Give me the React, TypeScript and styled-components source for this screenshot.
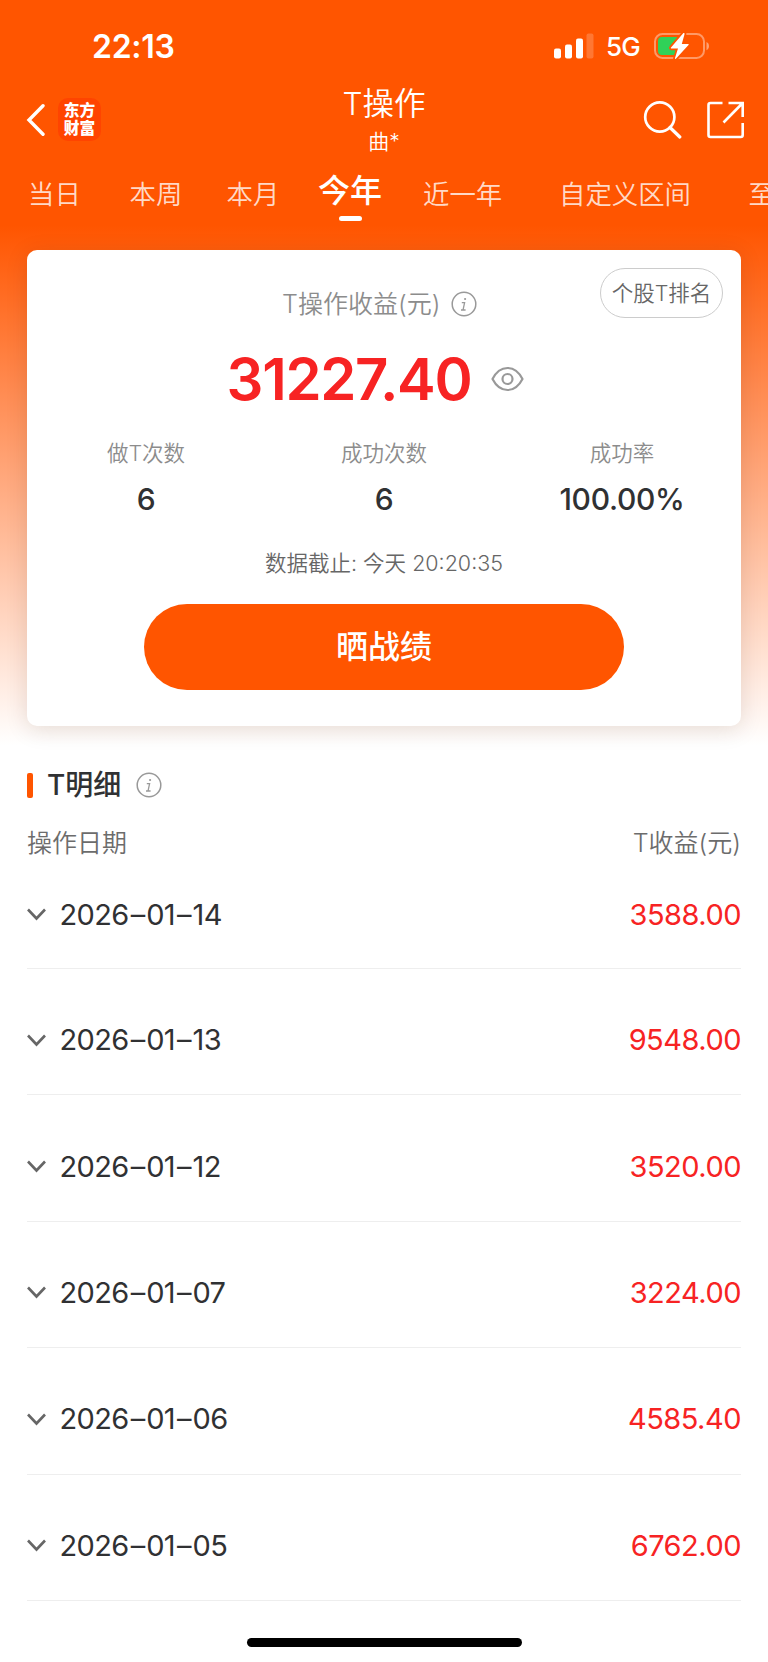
import React from "react";
import styled, { createGlobalStyle } from "styled-components";

const GlobalStyle = createGlobalStyle`
  *, *::before, *::after { box-sizing: border-box; }
  body {
    margin: 0;
    background: #fff;
    font-family: Inter, "Noto Sans CJK SC", sans-serif;
    color: #303133;
    overflow: hidden;
  }
  button { font: inherit; border: 0; padding: 0; background: none; color: inherit; }
`;

const Page = styled.div`
  width: 768px;
  height: 1662px;
  display: flex;
  flex-direction: column;
  overflow: hidden;
  background: linear-gradient(180deg, #ff5500 0, #ff5500 225px, #ffffff 745px);
`;

const StatusBar = styled.div`
  height: 81px;
  padding: 13px 58px 0 92px;
  display: flex;
  align-items: center;
  justify-content: space-between;
  color: #fff;
`;

const Clock = styled.span`
  font-size: 32px;
  font-weight: 600;
  line-height: 40px;
  letter-spacing: -0.3px;
`;

const StatusIcons = styled.div`
  display: flex;
  align-items: center;
  padding-bottom: 2px;
`;

const Network = styled.span`
  margin: 2px 14px 0 12px;
  font-size: 26px;
  font-weight: 500;
  line-height: 32px;
  letter-spacing: -0.8px;
`;

const NavBar = styled.header`
  height: 76px;
  padding: 0 24px 0 26px;
  display: grid;
  grid-template-columns: 1fr auto 1fr;
  align-items: center;
  color: #fff;
`;

const NavSide = styled.div<{ $end?: boolean }>`
  display: flex;
  align-items: center;
  justify-content: ${(p) => (p.$end ? "flex-end" : "flex-start")};
  gap: ${(p) => (p.$end ? 25 : 13)}px;
`;

const IconButton = styled.button`
  display: flex;
`;

const Logo = styled.div`
  width: 43px;
  height: 43px;
  padding-bottom: 2px;
  border-radius: 10px;
  background: #ff4400;
  display: flex;
  flex-direction: column;
  align-items: center;
  justify-content: center;
  font-family: "Noto Sans CJK SC", sans-serif;
  font-weight: 900;
  font-size: 15.7px;
  line-height: 18px;
`;

const TitleBlock = styled.div`
  display: flex;
  flex-direction: column;
  align-items: center;
  padding: 1px 2px 0 0;
`;

const Title = styled.h1`
  margin: 0;
  font-size: 31.5px;
  font-weight: 350;
  line-height: 44px;
`;

const Subtitle = styled.span`
  font-size: 21px;
  font-weight: 350;
  line-height: 32px;
`;

const Tabs = styled.nav`
  height: 75px;
  padding-left: 28px;
  display: grid;
  grid-template-columns: 101.5px 97px 91.5px 105px 136px 189.5px 60px;
  align-items: start;
`;

const Tab = styled.button<{ $active?: boolean }>`
  width: max-content;
  display: flex;
  flex-direction: column;
  align-items: center;
  white-space: nowrap;
  padding-top: ${(p) => (p.$active ? 14 : 17)}px;
  font-size: ${(p) => (p.$active ? 32 : 26.4)}px;
  font-weight: ${(p) => (p.$active ? 500 : 350)};
  line-height: 40px;
  color: ${(p) => (p.$active ? "#fff" : "rgba(255, 255, 255, 0.8)")};

  &::after {
    content: "";
    display: ${(p) => (p.$active ? "block" : "none")};
    width: 23px;
    height: 5.5px;
    margin-top: 4.5px;
    border-radius: 3px;
    background: #fff;
  }
`;

const Card = styled.section`
  position: relative;
  flex: none;
  height: 476px;
  margin: 17.5px 27px 0;
  border-radius: 10px;
  background: #fff;
  box-shadow: 0 4px 22px rgba(60, 30, 0, 0.13);
  display: flex;
  flex-direction: column;
  align-items: center;
`;

const RankButton = styled.button`
  position: absolute;
  top: 18px;
  right: 18px;
  width: 123px;
  height: 50px;
  border: 1px solid #ccc;
  border-radius: 25px;
  font-size: 21.5px;
  font-weight: 350;
  line-height: 48px;
  color: #666;
  white-space: nowrap;
`;

const CardTitle = styled.div`
  margin-top: 36px;
  height: 36px;
  display: flex;
  align-items: center;
  gap: 10.5px;
  padding-right: 9px;
  font-size: 25px;
  font-weight: 350;
  line-height: 36px;
  color: #8c8c8c;
`;

const ProfitRow = styled.div`
  margin-top: 24px;
  height: 66px;
  display: flex;
  align-items: center;
  gap: 20px;
  padding-right: 17px;
`;

const Profit = styled.span`
  font-size: 58px;
  font-weight: 570;
  line-height: 66px;
  letter-spacing: -1.3px;
  color: #f72323;
`;

const Stats = styled.div`
  align-self: stretch;
  margin-top: 25px;
  display: grid;
  grid-template-columns: repeat(3, 1fr);
`;

const Stat = styled.div`
  display: flex;
  flex-direction: column;
  align-items: center;
`;

const StatLabel = styled.span`
  font-size: 21.5px;
  font-weight: 350;
  line-height: 32px;
  color: #8c8c8c;
`;

const StatValue = styled.span`
  margin-top: 10px;
  font-size: 30px;
  font-weight: 500;
  line-height: 40px;
  letter-spacing: -0.3px;
`;

const Deadline = styled.div`
  margin-top: 28px;
  font-size: 21.5px;
  font-weight: 350;
  line-height: 32px;
  color: #666;
`;

const ShareButton = styled.button`
  margin-top: 25.5px;
  width: 480px;
  height: 86px;
  border-radius: 43px;
  background: #ff5500;
  color: #fff;
  font-size: 32px;
  font-weight: 500;
  line-height: 86px;
`;

const Details = styled.section`
  padding: 41.5px 27px 0;
  display: flex;
  flex-direction: column;
`;

const SectionTitle = styled.div`
  height: 36px;
  display: flex;
  align-items: center;
`;

const Marker = styled.i`
  width: 6px;
  height: 25px;
  border-radius: 2px;
  background: #ff5500;
`;

const SectionName = styled.h2`
  margin: 0 15px 0 14px;
  font-size: 28px;
  font-weight: 500;
  line-height: 36px;
`;

const ColumnHeads = styled.div`
  margin-top: 22px;
  display: flex;
  justify-content: space-between;
  font-size: 25px;
  font-weight: 350;
  line-height: 36px;
  color: #6c6c6c;
`;

const Row = styled.div`
  height: 126.4px;
  padding-top: 17px;
  border-bottom: 1.5px solid #eee;
  display: flex;
  align-items: center;
  justify-content: space-between;

  &:first-of-type {
    height: 108px;
    padding-top: 0;
  }
`;

const RowList = styled.div`
  display: flex;
  flex-direction: column;
`;

const DateCell = styled.div`
  display: flex;
  align-items: center;
  gap: 12.5px;
  font-size: 29px;
  font-weight: 380;
  line-height: 40px;
  letter-spacing: -0.6px;
  font-feature-settings: "calt" 0;
`;

const Dash = styled.span`
  margin: 0 1.5px 0 2px;
`;

const Amount = styled.span`
  font-size: 29px;
  font-weight: 380;
  line-height: 40px;
  letter-spacing: -0.5px;
  color: #f72323;
`;

const HomeIndicator = styled.div`
  flex: none;
  width: 275px;
  height: 9.5px;
  margin: auto auto 15px;
  border-radius: 5px;
  background: #000;
`;

const InfoIcon = () => (
  <svg width="26" height="26" viewBox="0 0 26 26" fill="none" stroke="#999">
    <circle cx="13" cy="13" r="11.8" strokeWidth="1.5" />
    <circle cx="14.1" cy="8" r="1.1" fill="#999" stroke="none" />
    <path d="M10.8 11.6h2.8l-1.5 7M10 19h4.6" strokeWidth="1.3" />
  </svg>
);

const EyeIcon = () => (
  <svg width="33" height="26" viewBox="0 0 33 26" fill="none" stroke="#999" strokeWidth="2.2">
    <path d="M1.5 13C5 6.2 10.4 2 16.5 2S28 6.2 31.5 13C28 19.8 22.6 24 16.5 24S5 19.8 1.5 13Z" strokeLinejoin="round" />
    <circle cx="16.5" cy="13" r="5" />
  </svg>
);

const ChevronDown = () => (
  <svg width="20" height="13" viewBox="0 0 20 13" fill="none" stroke="#666" strokeWidth="2.6">
    <path d="M1 1.5l8.500 9 8.500-9" />
  </svg>
);

const SignalIcon = () => (
  <svg width="40" height="26" viewBox="0 0 40 26" fill="#fff">
    <rect x="0" y="15.5" width="7" height="10" rx="2" />
    <rect x="11" y="11.5" width="7" height="14" rx="2" />
    <rect x="22" y="5.5" width="7" height="20" rx="2" />
    <rect x="32.5" y="0.5" width="7" height="25" rx="2" opacity="0.2" />
  </svg>
);

const BatteryIcon = () => (
  <svg width="56" height="28" viewBox="0 0 56 28">
    <rect x="1" y="2" width="49" height="24" rx="7.5" fill="none" stroke="#fff" strokeOpacity="0.4" strokeWidth="2" />
    <path d="M52.5 10c3.3 1.2 3.3 7 0 8.2z" fill="#fff" fillOpacity="0.45" />
    <path d="M8 5h15v18H8a4 4 0 0 1-4-4V9a4 4 0 0 1 4-4z" fill="#30d158" />
    <path
      d="M29 1.5L17 15.5c-.4.5-.1 1 .5 1h6.500l-3 9.500c-.3 1 .4 1.3 1.1.6L34.5 13c.4-.5.1-1-.5-1h-6.200l2.700-9.800c.3-1-.8-1.500-1.500-.7z"
      fill="#fff"
      stroke="#ff5500"
      strokeWidth="3.6"
      paintOrder="stroke"
    />
  </svg>
);

const BackIcon = () => (
  <svg width="19" height="32" viewBox="0 0 19 32" fill="none" stroke="#fff" strokeWidth="3.4">
    <path d="M17 1.8L3 16l14 14.2" strokeLinecap="round" />
  </svg>
);

const SearchIcon = () => (
  <svg width="40" height="40" viewBox="0 0 40 40" fill="none" stroke="#fff" strokeWidth="2.7">
    <circle cx="17.8" cy="17" r="14.6" />
    <path d="M28 27.5l9.800 9.500" strokeWidth="3.2" strokeLinecap="round" />
  </svg>
);

const ShareIcon = () => (
  <svg width="37" height="38" viewBox="0 0 37 38" fill="none" stroke="#fff" strokeWidth="2.6">
    <path d="M15.5 2H3.500Q1.500 2 1.500 4v30q0 2 2 2H33.700q2 0 2-2V22" />
    <path d="M21.500 2H35.700v14M35.200 2.500L16.500 21.500" />
  </svg>
);

const tabs = ["当日", "本周", "本月", "今年", "近一年", "自定义区间", "至今"];
const activeTab = "今年";

const stats = [
  { label: "做T次数", value: "6" },
  { label: "成功次数", value: "6" },
  { label: "成功率", value: "100.00%" },
];

const records = [
  { date: ["2026", "01", "14"], amount: "3588.00" },
  { date: ["2026", "01", "13"], amount: "9548.00" },
  { date: ["2026", "01", "12"], amount: "3520.00" },
  { date: ["2026", "01", "07"], amount: "3224.00" },
  { date: ["2026", "01", "06"], amount: "4585.40" },
  { date: ["2026", "01", "05"], amount: "6762.00" },
];

export default function App() {
  return (
    <Page>
      <GlobalStyle />
      <StatusBar>
        <Clock>22:13</Clock>
        <StatusIcons>
          <SignalIcon />
          <Network>5G</Network>
          <BatteryIcon />
        </StatusIcons>
      </StatusBar>
      <NavBar>
        <NavSide>
          <IconButton aria-label="返回"><BackIcon /></IconButton>
          <Logo>
            <span>东方</span>
            <span>财富</span>
          </Logo>
        </NavSide>
        <TitleBlock>
          <Title>T操作</Title>
          <Subtitle>曲*</Subtitle>
        </TitleBlock>
        <NavSide $end>
          <IconButton aria-label="搜索"><SearchIcon /></IconButton>
          <IconButton aria-label="分享"><ShareIcon /></IconButton>
        </NavSide>
      </NavBar>
      <Tabs>
        {tabs.map((t) => (
          <Tab key={t} $active={t === activeTab}>{t}</Tab>
        ))}
      </Tabs>
      <Card>
        <RankButton>个股T排名</RankButton>
        <CardTitle>
          <span>T操作收益(元)</span>
          <InfoIcon />
        </CardTitle>
        <ProfitRow>
          <Profit>31227.40</Profit>
          <EyeIcon />
        </ProfitRow>
        <Stats>
          {stats.map((s) => (
            <Stat key={s.label}>
              <StatLabel>{s.label}</StatLabel>
              <StatValue>{s.value}</StatValue>
            </Stat>
          ))}
        </Stats>
        <Deadline>数据截止: 今天 20:20:35</Deadline>
        <ShareButton>晒战绩</ShareButton>
      </Card>
      <Details>
        <SectionTitle>
          <Marker />
          <SectionName>T明细</SectionName>
          <InfoIcon />
        </SectionTitle>
        <ColumnHeads>
          <span>操作日期</span>
          <span>T收益(元)</span>
        </ColumnHeads>
        <RowList>
          {records.map(({ date: [year, month, day], amount }) => (
            <Row key={day}>
              <DateCell>
                <ChevronDown />
                <span>{year}<Dash>–</Dash>{month}<Dash>–</Dash>{day}</span>
              </DateCell>
              <Amount>{amount}</Amount>
            </Row>
          ))}
        </RowList>
      </Details>
      <HomeIndicator />
    </Page>
  );
}
